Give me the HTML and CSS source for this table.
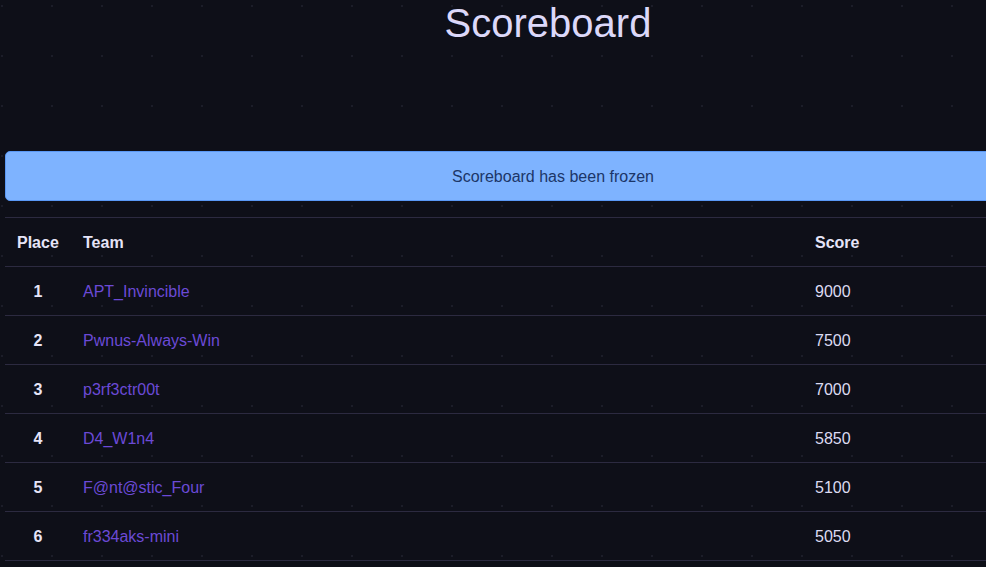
FILE: index.html
```html
<!DOCTYPE html>
<html lang="en">
<head>
<meta charset="utf-8">
<title>Scoreboard</title>
<link rel="stylesheet" href="styles.css">
</head>
<body>
<main class="container">
  <h1 class="title">Scoreboard</h1>
  <div class="alert">Scoreboard has been frozen</div>
  <table class="board">
    <colgroup>
      <col class="col-place">
      <col class="col-team">
      <col class="col-score">
    </colgroup>
    <thead>
      <tr><th>Place</th><th>Team</th><th>Score</th></tr>
    </thead>
    <tbody>
      <tr><td class="place">1</td><td><a class="team" href="#">APT_Invincible</a></td><td>9000</td></tr>
      <tr><td class="place">2</td><td><a class="team" href="#">Pwnus-Always-Win</a></td><td>7500</td></tr>
      <tr><td class="place">3</td><td><a class="team" href="#">p3rf3ctr00t</a></td><td>7000</td></tr>
      <tr><td class="place">4</td><td><a class="team" href="#">D4_W1n4</a></td><td>5850</td></tr>
      <tr><td class="place">5</td><td><a class="team" href="#">F@nt@stic_Four</a></td><td>5100</td></tr>
      <tr><td class="place">6</td><td><a class="team" href="#">fr334aks-mini</a></td><td>5050</td></tr>
    </tbody>
  </table>
</main>
</body>
</html>
```

FILE: styles.css
```css
html {
  overflow-x: hidden;
  background-color: #0e0f18;
  background-image: conic-gradient(at 2px 2px, transparent 75%, #1c1d29 0);
  background-size: 50px 50px;
  background-position: 1px 5px;
}

body {
  margin: 0;
  font-family: "Liberation Sans", Arial, sans-serif;
  font-size: 16px;
  line-height: 24px;
  color: #dddbf2;
}

.container {
  width: 1086px;
  margin-left: 5px;
}

.title {
  margin: 0 0 105px;
  font-size: 40px;
  line-height: 46px;
  font-weight: normal;
  text-align: center;
  color: #dcd8f9;
}

.alert {
  padding: 13px 12px 11px;
  margin-right: -10px;
  border: 1px solid #5a98f5;
  border-radius: 5px;
  background: #7eb3ff;
  color: #1c3668;
  text-align: center;
  margin-bottom: 16px;
}

.board {
  width: 100%;
  border-collapse: collapse;
}

.col-place { width: 66px; }
.col-team { width: 732px; }

.board th,
.board td {
  padding: 13px 12px 11px;
  border-top: 1px solid #2c2a40;
  border-bottom: 1px solid #2c2a40;
  text-align: left;
  white-space: nowrap;
}

.board th {
  font-weight: bold;
  color: #e6e4f7;
}

.board td.place {
  text-align: center;
  font-weight: bold;
  color: #e6e4f7;
}

.team {
  color: #6b4ad6;
  text-decoration: none;
}
```
